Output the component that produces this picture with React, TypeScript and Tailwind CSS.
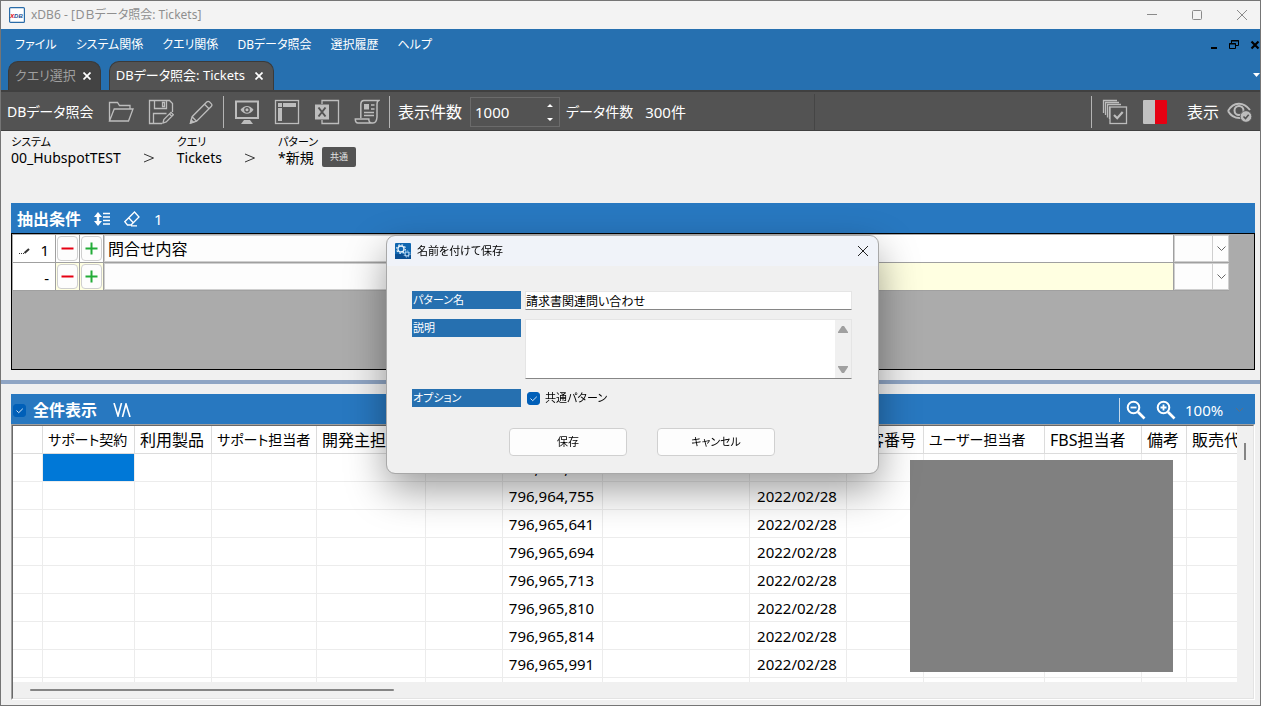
import type { ReactNode } from 'react';
import clsx from 'clsx';

const menuItems = ['ファイル', 'システム関係', 'クエリ関係', 'DBデータ照会', '選択履歴', 'ヘルプ'];

const columns = [
  { label: '', width: 'w-[30px]' },
  { label: 'サポート契約', width: 'w-[92px]', small: true },
  { label: '利用製品', width: 'w-[77px]' },
  { label: 'サポート担当者', width: 'w-[105px]', small: true },
  { label: '開発主担当者', width: 'w-[109px]' },
  { label: '', width: 'w-[77px]' },
  { label: '', width: 'w-[100px]' },
  { label: '', width: 'w-[147px]' },
  { label: '', width: 'w-[97px]' },
  { label: '顧客番号', width: 'w-[77px]' },
  { label: 'ユーザー担当者', width: 'w-[121px]', small: true },
  { label: 'FBS担当者', width: 'w-[97px]' },
  { label: '備考', width: 'w-[45px]' },
  { label: '販売代', width: 'w-[100px]' },
];

const tickets = [
  { id: '796,964,703', date: '2022/02/28' },
  { id: '796,964,755', date: '2022/02/28' },
  { id: '796,965,641', date: '2022/02/28' },
  { id: '796,965,694', date: '2022/02/28' },
  { id: '796,965,713', date: '2022/02/28' },
  { id: '796,965,810', date: '2022/02/28' },
  { id: '796,965,814', date: '2022/02/28' },
  { id: '796,965,991', date: '2022/02/28' },
  { id: '', date: '' },
];

function ToolButton({ label, children }: { label: string; children: ReactNode }) {
  return (
    <button aria-label={label} className="flex h-9 w-10 items-center justify-center">
      <svg viewBox="0 0 26 26" className="size-[26px]" fill="none" stroke="#bdbdbd" strokeWidth="1.3">
        {children}
      </svg>
    </button>
  );
}

function Separator() {
  return <div className="h-8 w-px shrink-0 bg-[#b4b4b4]" />;
}

function CheckBox({ id }: { id: string }) {
  return (
    <span className="grid size-[13px] shrink-0">
      <input
        id={id}
        type="checkbox"
        defaultChecked
        className="col-start-1 row-start-1 size-[13px] appearance-none rounded-[3px] border border-[#666] bg-white checked:border-[#005fb8] checked:bg-[#005fb8]"
      />
      <svg viewBox="0 0 13 13" className="pointer-events-none col-start-1 row-start-1 size-[13px]" fill="none" stroke="#d6e6f5">
        <path d="M3.5 6.5l2.2 2.2L9.8 4.7" />
      </svg>
    </span>
  );
}

function TitleBar() {
  return (
    <header className="flex h-7 shrink-0 items-center bg-[#f3f3f3] pl-2">
      <svg viewBox="0 0 16 16" className="size-4">
        <rect x="0.6" y="0.6" width="14.8" height="14.8" rx="1" fill="#fff" stroke="#2a6ca8" strokeWidth="1.2" />
        <text x="1.2" y="11" fontSize="7" fontWeight="900" fontStyle="italic" fontFamily="Liberation Sans, sans-serif">
          <tspan fill="#e0101c">x</tspan>
          <tspan fill="#1f4f93" fontSize="6">DB</tspan>
        </text>
      </svg>
      <h1 className="ml-1.5 text-xs text-[#8f8f8f]">xDB6 - [ＤＢデータ照会: Tickets]</h1>
      <div className="ml-auto flex text-[#8a8a8a]">
        <button aria-label="最小化" className="flex h-7 w-[45px] items-center justify-center pl-2">
          <svg viewBox="0 0 10 10" className="size-2.5" stroke="currentColor"><path d="M0 4.5h10" /></svg>
        </button>
        <button aria-label="最大化" className="flex h-7 w-[45px] items-center justify-center pl-2">
          <svg viewBox="0 0 10 10" className="size-2.5" fill="none" stroke="currentColor"><rect x="0.5" y="0.5" width="9" height="9" rx="1" /></svg>
        </button>
        <button aria-label="閉じる" className="flex h-7 w-[45px] items-center justify-center pl-2">
          <svg viewBox="0 0 10 10" className="size-2.5" stroke="currentColor"><path d="M0 0l10 10M10 0L0 10" /></svg>
        </button>
      </div>
    </header>
  );
}

function MenuBar() {
  return (
    <nav className="flex h-[31px] shrink-0 items-center gap-[19px] bg-[#2670b0] pl-3.5 text-xs text-white">
      {menuItems.map((item) => (
        <button key={item}>{item}</button>
      ))}
      <div className="ml-auto flex items-center gap-[11px] text-black">
        <button aria-label="子ウィンドウを最小化">
          <svg viewBox="0 0 8 10" className="h-2.5 w-2" fill="currentColor"><path d="M1 7h6v2H1z" /></svg>
        </button>
        <button aria-label="子ウィンドウを元に戻す">
          <svg viewBox="0 0 10 10" className="size-2.5" fill="none" stroke="currentColor"><path d="M2.5 3V.5h7v5H7M2 1h8M.5 3.5h6v5h-6zM0 4h7" /></svg>
        </button>
        <button aria-label="子ウィンドウを閉じる">
          <svg viewBox="0 0 10 10" className="size-2.5" stroke="currentColor" strokeWidth="2.2"><path d="M1.5 1.5l7 7M8.5 1.5l-7 7" /></svg>
        </button>
      </div>
    </nav>
  );
}

function Tab({ label, active }: { label: string; active?: boolean }) {
  return (
    <div
      className={clsx(
        'flex h-[29px] items-center rounded-t-[10px] border border-b-0 border-[#3a3a3a] pl-1.5 text-[13px]',
        active ? 'gap-2.5 bg-[#535353] pr-2 text-white' : 'gap-[7px] bg-[#434343] pr-[7px] text-[#9f9f9f]',
      )}
    >
      <button>{label}</button>
      <button aria-label="タブを閉じる">
        <svg viewBox="0 0 8 8" className="mr-0.5 size-2" stroke="#fff" strokeWidth="1.7"><path d="M.5.5l7 7M7.5.5l-7 7" /></svg>
      </button>
    </div>
  );
}

function Tabs() {
  return (
    <div className="flex h-[30px] shrink-0 items-end gap-2 bg-[#2670b0] pl-[7px]">
      <Tab label="クエリ選択" />
      <Tab label="DBデータ照会: Tickets" active />
      <button aria-label="タブ一覧" className="ml-auto flex h-full items-center">
        <svg viewBox="0 0 7 4" className="h-1 w-[7px]" fill="#fff"><path d="M0 0h7L3.5 4z" /></svg>
      </button>
    </div>
  );
}

function Toolbar() {
  return (
    <div className="flex h-[41px] shrink-0 items-center border-t-2 border-b border-[#404040] bg-[#535353] pt-0.5 pr-px pl-1.5 text-base text-white">
      <span className="w-[94px] whitespace-nowrap text-sm">DBデータ照会</span>
      <ToolButton label="開く">
        <path d="M1.5 22V3.5h8l2 3h10.500V10M1.500 22L6.200 10H25l-4.500 12z" />
      </ToolButton>
      <ToolButton label="保存">
        <path d="M14 24.500H1.500v-23h20l3 3V13M6.500 1.500v8h12v-8M14.500 3.500h2v4h-2zM5.500 24V14.500h13" />
        <path d="M15 24l.8-3.500 7.200-7.200 2.400 2.400-7.200 7.200zM21.500 15l2.400 2.400" />
      </ToolButton>
      <ToolButton label="編集">
        <path d="M2.500 24l1.600-6.300L18.700 3c1-1 2-.8 2.900 0l1.600 1.600c.9.900.9 2 0 2.900L8.600 22.200zM16.500 5.200l4.500 4.500M4.100 17.700l4.500 4.500" />
        <path d="M2.500 24l.8-3 2.200 2.200z" fill="#bdbdbd" />
      </ToolButton>
      <div className="w-0.5" />
      <Separator />
      <div className="w-[3px]" />
      <ToolButton label="表示">
        <rect x="2" y="2.500" width="22" height="16.500" strokeWidth="2" />
        <path d="M6.500 10.800c3.500-5.200 9.500-5.200 13 0-3.500 5.200-9.500 5.200-13 0z" fill="#bdbdbd" stroke="none" />
        <circle cx="13" cy="10.800" r="2.200" stroke="#535353" />
        <path d="M10 21h6l3 4H7z" fill="#bdbdbd" stroke="none" />
      </ToolButton>
      <ToolButton label="レイアウト">
        <rect x="1.500" y="1.500" width="23" height="23" />
        <path d="M4 4h4v4H4zM9 4h13v4H9zM4 9h4v13H4z" fill="#bdbdbd" stroke="none" />
      </ToolButton>
      <ToolButton label="Excel出力">
        <path d="M8 5V1.500h16.500v23H8V21" />
        <path d="M1 5.500h14v15H1z" fill="#bdbdbd" stroke="none" />
        <path d="M4.500 8.500l7 9M11.500 8.500l-7 9" stroke="#535353" strokeWidth="2" />
      </ToolButton>
      <ToolButton label="スクリプト">
        <path d="M6.800 19V5c.2-2.300 1-3.500 3-3.500h14.700c-1.300.8-1.500 2-1.500 3.500v13c-.3 4-1.800 6-4 6H4c-1.800 0-2.700-1.500-2.700-4h13.500c0 2.400 1 4 3.200 4M10 16.500h10M10 13.500h10M17 10h3.500M17 6h3.500" strokeWidth="1.500" />
        <path d="M10 5h5v5.500h-5z" fill="#bdbdbd" stroke="none" />
      </ToolButton>
      <div className="w-0.5" />
      <Separator />
      <label htmlFor="limit" className="ml-2">表示件数</label>
      <div className="ml-2 flex h-[30px] w-[90px] items-center border border-[#6b6b6b] pr-1.5 pl-1">
        <input id="limit" defaultValue="1000" className="w-full min-w-0 bg-transparent text-[15px] outline-none" />
        <svg viewBox="0 0 6 18" className="h-[18px] w-1.5 shrink-0" fill="#fff"><path d="M0 4l3-3 3 3zM0 15h6l-3 3z" /></svg>
      </div>
      <span className="ml-1.5 text-sm">データ件数</span>
      <span className="ml-3 text-[15px]">300件</span>
      <div className="ml-32 h-full w-px bg-[#454545]" />
      <div className="ml-auto" />
      <Separator />
      <div className="w-[3px]" />
      <ToolButton label="一括選択">
        <path d="M1.500 14V1.500H15M3.500 16V3.500H17M5.500 18.500V5.500H19M7.500 20V7.500" />
        <rect x="8" y="8" width="16.500" height="16.500" fill="#535353" />
        <path d="M12 16l3.200 3.200 5.500-6.200" strokeWidth="2.200" />
      </ToolButton>
      <ToolButton label="配色">
        <path d="M1 2a1 1 0 011-1h11v24H2a1 1 0 01-1-1z" fill="#c1c1c1" stroke="none" />
        <path d="M13 1h11a1 1 0 011 1v22a1 1 0 01-1 1H13z" fill="#e60012" stroke="none" />
      </ToolButton>
      <span className="ml-3">表示</span>
      <ToolButton label="表示切替">
        <path d="M2 12C7.500 2.500 17.500 2.500 24 11M2 12c3.500 6 8 7.500 13 7" strokeWidth="2" />
        <circle cx="13" cy="11.500" r="4.500" strokeWidth="2" />
        <circle cx="20" cy="17.500" r="5.800" fill="#bdbdbd" stroke="#535353" strokeWidth="0.800" />
        <path d="M17.500 17.500l2 2 3.200-3.800" stroke="#535353" strokeWidth="1.600" />
      </ToolButton>
    </div>
  );
}

function Crumb({ label, value }: { label: string; value: string }) {
  return (
    <div>
      <p className="text-[11px] leading-4">{label}</p>
      <p className="text-sm leading-4">{value}</p>
    </div>
  );
}

function Breadcrumbs() {
  return (
    <div className="flex h-[72px] shrink-0 items-start gap-[23px] pt-[3px] pl-2.5">
      <Crumb label="システム" value="00_HubspotTEST" />
      <svg viewBox="0 0 10 10" className="mt-[19px] size-2.5" fill="none" stroke="#333"><path d="M0 1l9.500 4L0 9" /></svg>
      <Crumb label="クエリ" value="Tickets" />
      <svg viewBox="0 0 10 10" className="mt-[19px] size-2.5" fill="none" stroke="#333"><path d="M0 1l9.500 4L0 9" /></svg>
      <div className="flex gap-1">
        <Crumb label="パターン" value="*新規" />
        <span className="mt-[13px] flex h-5 w-[34px] items-center justify-center rounded-xs bg-[#535353] text-[9px] text-[#e0e0e0]">共通</span>
      </div>
    </div>
  );
}

function ConditionRow({ no, text, editing }: { no: string; text: string; editing?: boolean }) {
  return (
    <div className="flex h-7 border-b border-[#a0a0a0]">
      <div className="flex w-[43px] shrink-0 items-center justify-end border-r border-[#a0a0a0] bg-white pt-1 pr-1.5 text-[15px]">
        {editing && (
          <svg viewBox="0 0 12 8" className="mr-auto ml-1.5 h-2 w-3" fill="none" stroke="#333">
            <path d="M0 6.500h1M2 6.500h1M4 6.500h1" />
            <path d="M5.500 6L10 2" strokeWidth="2" />
          </svg>
        )}
        {no}
      </div>
      {['行を削除', '行を追加'].map((label, i) => (
        <div key={label} className={clsx('w-6 shrink-0 border-r border-[#a0a0a0]', editing ? 'bg-white' : 'bg-[#ffffe1]')}>
          <button aria-label={label} className="mx-px mt-px flex h-[25px] w-[21px] items-center justify-center rounded-sm border border-[#cfcfcf] bg-[#fdfdfd]">
            <svg viewBox="0 0 13 13" className="size-[13px] shrink-0" strokeWidth="2">
              {i === 0 ? <path d="M.5 6.500h12" stroke="#e60012" /> : <path d="M.5 6.500h12M6.500 .5v12" stroke="#22ac38" />}
            </svg>
          </button>
        </div>
      ))}
      <input aria-label="項目" defaultValue={text} className="w-[362px] shrink-0 border border-[#cfcfcf] bg-[#fdfdfd] px-[3px] text-base outline-none" />
      <input aria-label="値" className={clsx('min-w-0 flex-1 border-x border-[#a0a0a0] outline-none', editing ? 'bg-white' : 'bg-[#ffffe1]')} />
      <div className="relative w-[55px] shrink-0">
        <select aria-label="結合" className="size-full appearance-none border border-[#cfcfcf] bg-[#fdfdfd]" />
        <div className="pointer-events-none absolute inset-y-0 right-0 flex w-[17px] items-center justify-center border-l border-[#cfcfcf]">
          <svg viewBox="0 0 9 5" className="h-[5px] w-[9px]" fill="none" stroke="#666"><path d="M.5.5l4 4 4-4" /></svg>
        </div>
      </div>
    </div>
  );
}

function ConditionPanel() {
  return (
    <section className="mr-[5px] ml-2.5 shrink-0">
      <div className="flex h-[30px] items-center bg-[#2878c0] pt-0.5 pl-1.5 text-white">
        <h2 className="text-base font-bold">抽出条件</h2>
        <button aria-label="並べ替え" className="ml-3">
          <svg viewBox="0 0 18 16" className="h-4 w-[18px]" fill="none" stroke="#fff" strokeWidth="1.600">
            <path d="M1 6l4-5 4 5zM1 10l4 5 4-5z" fill="#fff" stroke="none" />
            <path d="M5 4v8" strokeWidth="2.500" />
            <path d="M10 2.500h7M10 6h7M10 9.500h7M10 13h7" />
          </svg>
        </button>
        <button aria-label="クリア" className="ml-[13px]">
          <svg viewBox="0 0 16 16" className="size-4" fill="none" stroke="#fff" strokeWidth="1.300">
            <path d="M10.500 1L15 6 7 14H3.500L.8 10.700zM4.500 6.500l5 5.500M7 14.800h6" />
          </svg>
        </button>
        <span className="ml-3.5 text-[15px]">1</span>
      </div>
      <div className="h-[137px] border border-black bg-[#ababab] pt-px pr-[25px] pl-px">
        <ConditionRow no="1" text="問合せ内容" editing />
        <ConditionRow no="-" text="" />
      </div>
    </section>
  );
}

function ResultTable() {
  return (
    <table className="w-[1274px] table-fixed border-separate border-spacing-0 bg-white">
      <thead>
        <tr>
          {columns.map((col, i) => (
            <th
              key={i}
              className={clsx(
                'h-7 overflow-hidden border-r border-b border-[#dcdcdc] p-0 pl-[5px] text-left leading-6 font-normal whitespace-nowrap',
                col.width,
                col.small ? 'text-sm leading-6' : 'text-base leading-6',
              )}
            >
              {col.label}
            </th>
          ))}
        </tr>
      </thead>
      <tbody>
        {tickets.map((ticket, row) => (
          <tr key={row}>
            {columns.map((_, i) => (
              <td
                key={i}
                className={clsx(
                  'h-7 border-r border-b border-[#ececec] p-0 pr-0.5 text-center text-[15px] leading-6',
                  row === 0 && i === 1 && 'bg-[#0078d7]',
                )}
              >
                {i === 6 && ticket.id}
                {i === 8 && ticket.date}
              </td>
            ))}
          </tr>
        ))}
      </tbody>
    </table>
  );
}

function ResultPanel() {
  return (
    <section className="mt-2.5 mr-[5px] mb-[5px] ml-2.5 flex min-h-0 flex-1 flex-col">
      <div className="flex h-[30px] shrink-0 items-center bg-[#2878c0] pt-0.5 pr-3 pl-0.5 text-white">
        <CheckBox id="show-all" />
        <label htmlFor="show-all" className="ml-[7px] text-base font-bold">全件表示</label>
        <button aria-label="列幅調整" className="ml-4">
          <svg viewBox="0 0 18 14" className="h-3.5 w-[18px]" fill="none" stroke="#fff" strokeWidth="1.600">
            <path d="M1 0l4 13L8.500 0M9.500 14L13 1l4 13" />
          </svg>
        </button>
        <div className="ml-auto h-6 w-px bg-[#c4d8ea]" />
        <button aria-label="縮小" className="ml-1.5">
          <svg viewBox="0 0 20 20" className="size-5" fill="none" stroke="#fff" strokeWidth="2">
            <circle cx="7.500" cy="7.500" r="5.800" />
            <path d="M4.500 7.500h6" strokeWidth="1.800" />
            <path d="M12 12l6.500 6.500" strokeWidth="2.600" />
          </svg>
        </button>
        <button aria-label="拡大" className="ml-2.5">
          <svg viewBox="0 0 20 20" className="size-5" fill="none" stroke="#fff" strokeWidth="2">
            <circle cx="7.500" cy="7.500" r="5.800" />
            <path d="M4.500 7.500h6M7.500 4.500v6" strokeWidth="1.800" />
            <path d="M12 12l6.500 6.500" strokeWidth="2.600" />
          </svg>
        </button>
        <select aria-label="表示倍率" className="ml-[9px] w-[51px] appearance-none bg-transparent text-[15px] outline-none">
          <option>100%</option>
        </select>
        <svg viewBox="0 0 7 4" className="h-1 w-[7px]" fill="none" stroke="#5f6f7f"><path d="M0 0l3.500 3.500L7 0" /></svg>
      </div>
      <div className="min-h-0 flex-1 border-t border-r border-b border-l border-t-[#a0a0a0] border-r-white border-b-white border-l-[#a0a0a0]">
        <div className="flex h-full flex-col border border-t-[#696969] border-r-[#e3e3e3] border-b-[#e3e3e3] border-l-[#696969]">
          <div className="flex min-h-0 flex-1">
            <div className="relative min-w-0 flex-1 overflow-hidden bg-white">
              <ResultTable />
              {/* masked customer data */}
              <div className="absolute top-[34px] left-[897px] h-[212px] w-[263px] bg-[#808080]" />
            </div>
            <div className="flex w-4 shrink-0 justify-center pt-[17px]">
              <div className="h-[17px] w-0.5 bg-[#858585]" />
            </div>
          </div>
          <div className="flex h-4 shrink-0 items-center pl-[17px]">
            <div className="h-0.5 w-[364px] rounded-full bg-[#858585]" />
          </div>
        </div>
      </div>
    </section>
  );
}

function FieldLabel({ htmlFor, children }: { htmlFor: string; children: ReactNode }) {
  return (
    <label htmlFor={htmlFor} className="h-[18px] w-[109px] shrink-0 bg-[#2670b0] pl-px leading-[18px] text-white">
      {children}
    </label>
  );
}

function SaveDialog() {
  return (
    <div className="pointer-events-none fixed inset-0 flex items-center justify-center pt-[3px] pl-1">
      <div
        role="dialog"
        aria-labelledby="dialog-title"
        className="pointer-events-auto w-[491px] overflow-hidden rounded-lg bg-[#f0f0f0] text-[11px] text-black shadow-[0_16px_40px_rgba(0,0,0,0.4)] outline outline-[#a8a8a8]"
      >
        <div className="flex h-[30px] items-center bg-[#f0f3f9] pr-2.5 pl-2">
          <svg viewBox="0 0 16 16" className="size-4" fill="none">
            <rect width="16" height="16" rx="1" fill="#0f66b0" />
            <path d="M0 11h16v5H0z" fill="#0a4f93" />
            <circle cx="6" cy="6" r="3" stroke="#e8f3fc" strokeWidth="1.300" />
            <circle cx="6" cy="6" r="4.300" stroke="#e8f3fc" strokeWidth="1.200" strokeDasharray="1.600 1.780" />
            <circle cx="12" cy="11" r="2" stroke="#b5d8f4" strokeWidth="1.100" />
            <circle cx="12" cy="11" r="3.100" stroke="#b5d8f4" strokeDasharray="1.200 1.230" />
          </svg>
          <h2 id="dialog-title" className="ml-1.5">名前を付けて保存</h2>
          <button aria-label="閉じる" className="ml-auto">
            <svg viewBox="0 0 10 10" className="size-2.5" stroke="#222"><path d="M0 0l10 10M10 0L0 10" /></svg>
          </button>
        </div>
        <form className="pt-[25px] pr-[26px] pb-[17px] pl-[25px]" onSubmit={(e) => e.preventDefault()}>
          <div className="flex gap-1">
            <FieldLabel htmlFor="pattern-name">パターン名</FieldLabel>
            <input id="pattern-name" defaultValue="請求書関連問い合わせ" className="h-[19px] min-w-0 flex-1 border border-[#e5e5e5] border-b-[#868686] bg-white text-xs outline-none" />
          </div>
          <div className="mt-[9px] flex gap-1">
            <FieldLabel htmlFor="description">説明</FieldLabel>
            <div className="flex h-[60px] min-w-0 flex-1 border border-[#e5e5e5] border-b-[#868686] bg-white">
              <textarea id="description" className="min-w-0 flex-1 resize-none outline-none" />
              <div className="flex w-4 flex-col items-center justify-between bg-[#f0f0f0] pt-1.5 pb-[5px]">
                <svg viewBox="0 0 10 7" className="h-[7px] w-2.5" fill="#a0a0a0"><path d="M4 0h2l4 6v1H0V6z" /></svg>
                <svg viewBox="0 0 10 7" className="h-[7px] w-2.5" fill="#a0a0a0"><path d="M0 0h10v1L6 7H4L0 1z" /></svg>
              </div>
            </div>
          </div>
          <div className="mt-2.5 flex items-center">
            <FieldLabel htmlFor="shared">オプション</FieldLabel>
            <div className="ml-1.5 flex items-center gap-[5px]">
              <CheckBox id="shared" />
              <label htmlFor="shared">共通パターン</label>
            </div>
          </div>
          <div className="mt-[21px] flex justify-center gap-[30px] pl-5">
            <button type="submit" className="h-7 w-[118px] rounded-sm border border-[#d0d0d0] bg-[#fdfdfd]">保存</button>
            <button type="button" className="h-7 w-[118px] rounded-sm border border-[#d0d0d0] bg-[#fdfdfd]">キャンセル</button>
          </div>
        </form>
      </div>
    </div>
  );
}

export default function App() {
  return (
    <div className="flex h-screen flex-col overflow-hidden border border-[#757575] bg-[#f0f0f0] font-['Noto_Sans','Noto_Sans_CJK_JP',sans-serif] text-black [font-feature-settings:'palt']">
      <TitleBar />
      <MenuBar />
      <Tabs />
      <Toolbar />
      <Breadcrumbs />
      <ConditionPanel />
      <div className="mt-2.5 h-1 shrink-0 bg-[#8fa5c4]" />
      <ResultPanel />
      <SaveDialog />
    </div>
  );
}
